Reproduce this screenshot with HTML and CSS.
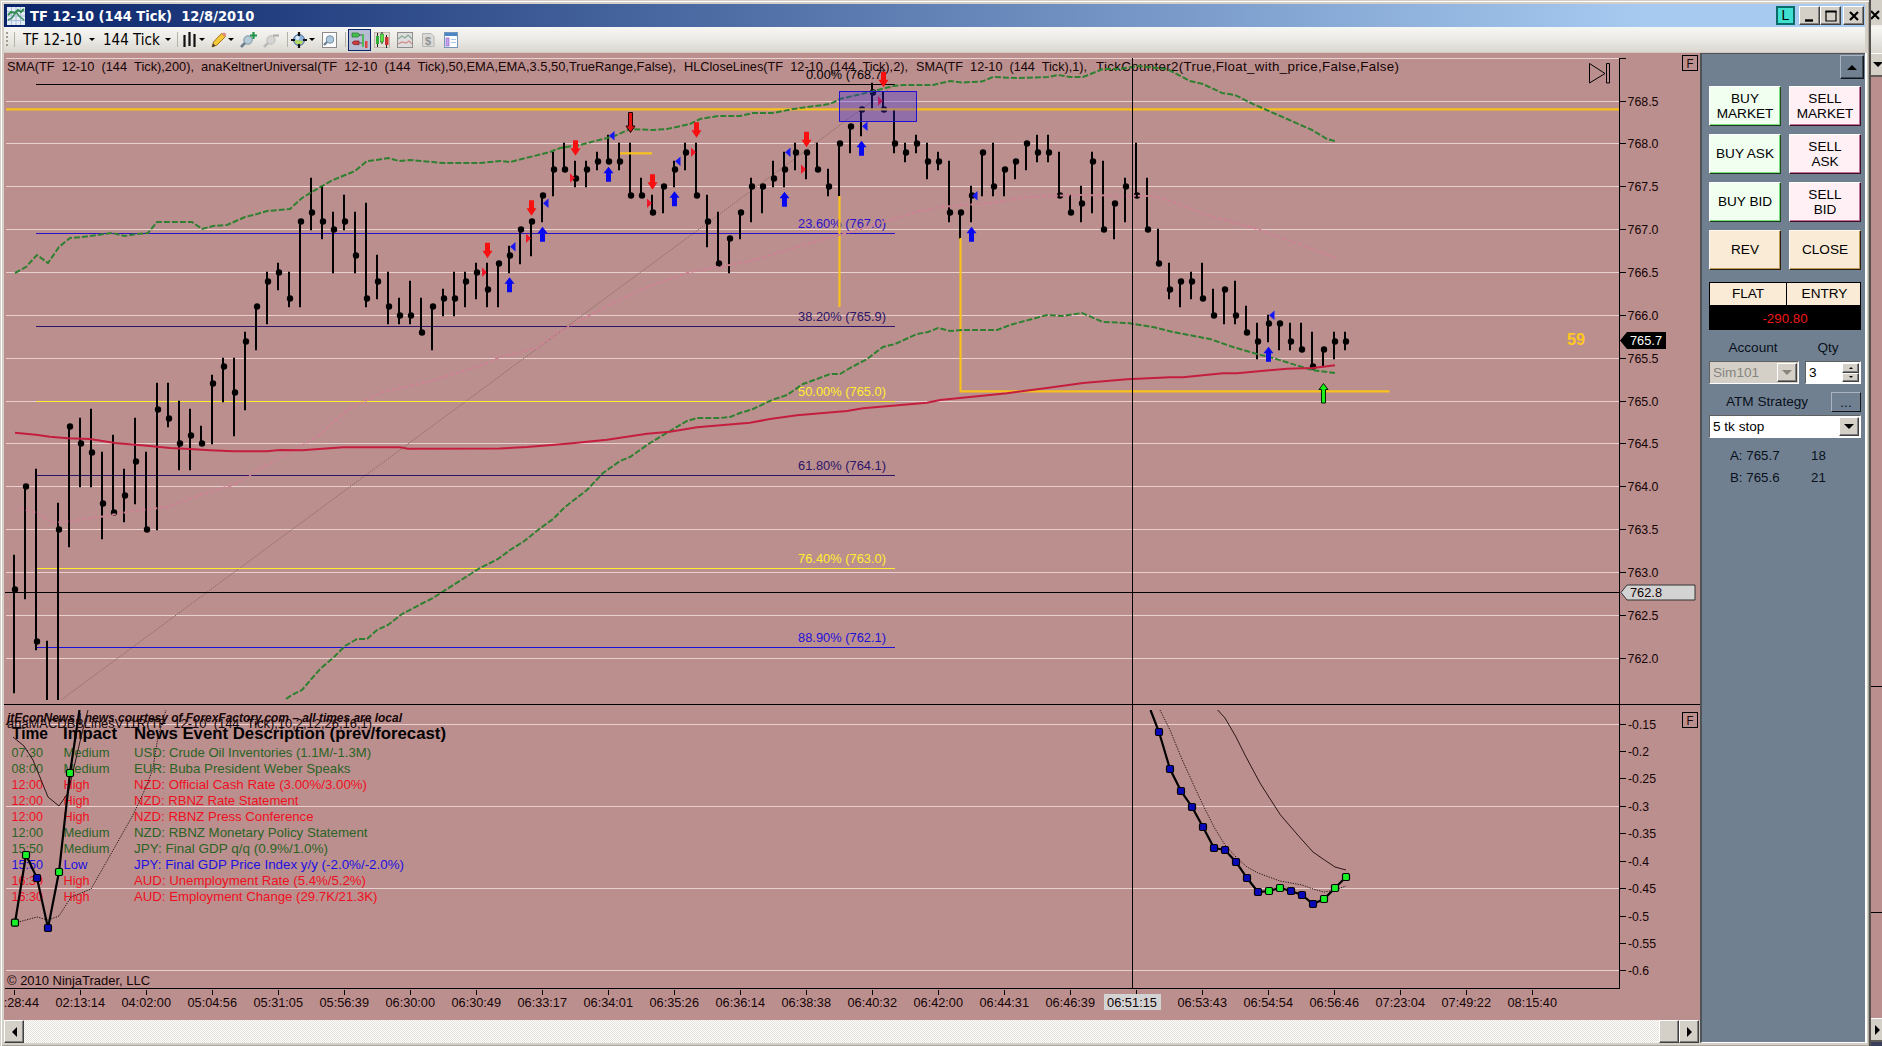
FILE: index.html
```html
<!DOCTYPE html>
<html lang="en">
<head>
  <meta charset="UTF-8">
  <title>TF 12-10 (144 Tick) 12/8/2010</title>
  <link rel="stylesheet" href="styles.css">
</head>
<body>
  <div class="window">
    <header class="titlebar">
      <svg class="app-icon" width="18" height="18" viewBox="0 0 18 18">
        <rect width="18" height="18" fill="#e4ecf6"/>
        <path d="M0 4.5h18M0 9h18M0 13.5h18M4.5 0v18M9 0v18M13.5 0v18" stroke="#a9bdd8" stroke-width="1"/>
        <path d="M1 8l3-3 4 1 3-3 3 2 3-3" fill="none" stroke="#2f8a4a" stroke-width="2"/>
        <path d="M1 13l4-2 4-6 3 4 5 4" fill="none" stroke="#3d8f63" stroke-width="1.6"/>
      </svg>
      <h1>TF 12-10 (144 Tick)&nbsp; 12/8/2010</h1>
      <div class="win-buttons">
        <span class="link-btn">L</span>
        <button class="win-btn"><svg width="12" height="12"><path d="M1 10.5h8" stroke="#000" stroke-width="2.4"/></svg></button>
        <button class="win-btn"><svg width="12" height="12"><path d="M1 1.5h10v9.500h-10z" fill="none" stroke="#000" stroke-width="1.2"/><path d="M.5 1.500h11" stroke="#000" stroke-width="2"/></svg></button>
        <button class="win-btn close"><svg width="12" height="12"><path d="M2 2l8 8M10 2l-8 8" stroke="#000" stroke-width="2.2"/></svg></button>
      </div>
    </header>

    <div class="toolbar">
      <i class="grip"></i><i class="sep"></i>
      <span class="tool-label instrument">TF 12-10</span><i class="caret"></i>
      <span class="tool-label interval">144 Tick</span><i class="caret"></i>
      <i class="sep s2"></i>
      <svg class="ic-bars" width="13" height="16"><path d="M1.500 3v12M6.500 0v14M11.500 2v13" stroke="#111" stroke-width="2.200"/></svg><i class="caret c3"></i>
      <svg class="ic-pencil" width="16" height="16"><path d="M1 15l1.500-5L10.500 1.500 14.500 4.500 6 13z" fill="#f3c93a" stroke="#a9741c"/><path d="M10.500 1.500l4 3 .8-2.500-2-1.600z" fill="#e58a8a"/><path d="M1 15l1-3.500 2.500 2.200z" fill="#333"/></svg><i class="caret c4"></i>
      <svg class="ic-zin" width="17" height="16"><path d="M1 15l5-5" stroke="#6c8191" stroke-width="2.600"/><circle cx="8" cy="8" r="4.200" fill="#b5cbd8" stroke="#7893a6"/><path d="M13.500 0v7M10 3.500h7" stroke="#22934a" stroke-width="2.200"/></svg>
      <svg class="ic-zout" width="17" height="16"><path d="M1 15l5-5" stroke="#bbb" stroke-width="2.600"/><circle cx="8" cy="8" r="4.200" fill="#d5d5d3" stroke="#bdbdbb"/><path d="M10 3.500h6" stroke="#a9a9a7" stroke-width="2"/></svg>
      <i class="sep s3"></i>
      <svg class="ic-cross" width="16" height="16"><circle cx="8" cy="8" r="5.500" fill="#8fb4dc" stroke="#476b94"/><path d="M4 8a4 4 0 0 0 8 1z" fill="#b5d95e"/><circle cx="6.500" cy="6" r="2" fill="#dcebf8"/><path d="M8 0v4M8 12v4M0 8h4M12 8h4" stroke="#111" stroke-width="2.200"/></svg><i class="caret c5"></i>
      <svg class="ic-find" width="15" height="16"><rect x=".5" y=".5" width="14" height="15" fill="#fdfdfd" stroke="#8b8b8b"/><path d="M2 13l4-4" stroke="#6c8191" stroke-width="2.400"/><circle cx="8" cy="7.500" r="3.800" fill="#adc8db" stroke="#7893a6"/></svg>
      <i class="sep s4"></i>
      <span class="tool-active"><svg width="18" height="18"><path d="M1 2h6l2 2-2 2h-6z" fill="#43bf4d" stroke="#2b7c35" stroke-width=".8"/><path d="M8 10h-5l-2 1.800 2 1.800h5z" fill="#d03a3a" stroke="#7f2424" stroke-width=".8"/><path d="M8 4h4M8 12h4" stroke="#555"/><rect x="11" y="3" width="2" height="13" fill="#4fb85b"/><rect x="14" y="10" width="2.500" height="7" fill="#d44"/></svg></span>
      <svg class="ic-candles" width="16" height="16"><rect x=".5" y=".5" width="15" height="15" fill="#e4e0d8" stroke="#bdb7ae"/><path d="M3.500 1v14M8 0v12M12.500 3v13" stroke="#222"/><rect x="2" y="4" width="3" height="8" fill="#2fae38"/><rect x="6.500" y="2" width="3" height="8" fill="#58e23c" stroke="#187020" stroke-width=".5"/><rect x="11" y="5" width="3.500" height="8" fill="#cc3232"/></svg>
      <svg class="ic-chart" width="16" height="16"><rect x=".5" y=".5" width="15" height="15" fill="#dedede" stroke="#8e8e8e"/><path d="M1 7l4-3 3 2 3-3 4 4" fill="none" stroke="#8aa894" stroke-width="1.200"/><path d="M1 12l4-2 4 1 3-2 3 3" fill="none" stroke="#d08a8a" stroke-width="1.200"/></svg>
      <svg class="ic-dollar" width="13" height="16"><path d="M.5 1.500h8.500l3 3v10h-11.500z" fill="#dadad8" stroke="#b5b5b3"/><text x="3" y="13" class="dollar">$</text></svg>
      <svg class="ic-props" width="14" height="16"><rect x=".5" y=".5" width="13" height="15" fill="#fff" stroke="#7395b8"/><rect x="1" y="1" width="12" height="3" fill="#4a86c8"/><rect x="2" y="6" width="3" height="8" fill="#c9a5f0" stroke="#8a62c4" stroke-width=".7"/><path d="M7 7.500h5M7 10.500h5" stroke="#a8c4e0"/></svg>
    </div>

    <div class="body">
      <div class="chart-col">
        <svg id="chart" class="chart" viewBox="4 53 1696 967" width="1696" height="967"></svg>
        <div class="scrollbar">
          <button class="sb-btn"><i class="tri-left"></i></button>
          <div class="sb-track"></div>
          <div class="sb-thumb"></div>
          <button class="sb-btn"><i class="tri-right"></i></button>
        </div>
      </div>

      <aside class="trader">
        <button class="collapse"><i class="tri-up"></i></button>
        <div class="orders">
          <button class="buy">BUY<br>MARKET</button><button class="sell">SELL<br>MARKET</button>
          <button class="buy">BUY ASK</button><button class="sell">SELL<br>ASK</button>
          <button class="buy">BUY BID</button><button class="sell">SELL<br>BID</button>
          <button class="flat">REV</button><button class="flat">CLOSE</button>
        </div>
        <div class="position">
          <span>FLAT</span><span>ENTRY</span>
        </div>
        <div class="pnl">-290.80</div>
        <div class="labels"><span>Account</span><span>Qty</span></div>
        <div class="fields">
          <div class="combo disabled"><span>Sim101</span><b><i class="tri-down"></i></b></div>
          <div class="spin"><span>3</span><div><b><i class="mini-up"></i></b><b><i class="mini-down"></i></b></div></div>
        </div>
        <div class="atm"><span>ATM Strategy</span><button>...</button></div>
        <div class="combo"><span>5 tk stop</span><b><i class="tri-down"></i></b></div>
        <div class="quote"><span>A: 765.7</span><span>18</span></div>
        <div class="quote"><span>B: 765.6</span><span>21</span></div>
      </aside>
    </div>
  </div>

  <div class="behind">
    <div class="b-title"><svg width="10" height="12"><path d="M0 2l8 8M8 2l-8 8" stroke="#000" stroke-width="2.200"/></svg></div>
    <div class="b-tool"></div>
    <div class="b-scroll"><i class="tri-down"></i></div>
    <div class="b-pane p1"></div>
    <div class="b-pane p2"></div>
    <div class="b-pane p3"></div>
    <div class="b-scroll b-last"><i class="tri-right"></i></div>
    <div class="b-foot"></div>
  </div>
  <script src="chart.js"></script>
</body>
</html>
```
FILE: styles.css
```css
* { box-sizing: border-box; }
body {
  margin: 0;
  width: 1882px;
  height: 1046px;
  overflow: hidden;
  display: flex;
  background: #d4d0c8;
  font-family: "Liberation Sans", Arial, sans-serif;
  color: #000;
}
button {
  font: inherit;
  color: inherit;
  padding: 0;
  margin: 0;
}
.window {
  width: 1871px;
  height: 1046px;
  padding: 4px 4px 3px 4px;
  border-right: 2px solid #55524e;
  background: #d4d0c8;
  box-shadow: inset 1px 1px #d4d0c8, inset 2px 2px #fff, inset -1px -1px #aaa69e;
}

/* title bar */
.titlebar {
  display: flex;
  align-items: center;
  height: 23px;
  padding: 0 1px 0 3px;
  background: linear-gradient(90deg, #0a246a, #a6caf0 88%);
}
.titlebar h1 {
  flex: 1;
  margin: 0 0 0 5px;
  color: #fff;
  font: bold 14.5px "DejaVu Sans Condensed", "DejaVu Sans", sans-serif;
  font-stretch: condensed;
  white-space: pre;
}
.win-buttons { display: flex; }
.link-btn {
  width: 19px;
  height: 19px;
  margin-right: 4px;
  border: 2px solid #0b6a6a;
  background: #40e0d0;
  font-size: 14px;
  line-height: 15px;
  text-align: center;
}
.win-btn {
  width: 21px;
  height: 19px;
  display: flex;
  align-items: center;
  justify-content: center;
}
.win-btn.close { margin-left: 2px; }
.win-btn, .sb-btn, .sb-thumb, .combo b, .spin b {
  background: #d4d0c8;
  border: 1px solid;
  border-color: #fff #404040 #404040 #fff;
  box-shadow: inset -1px -1px #808080;
}

/* toolbar */
.toolbar {
  display: flex;
  align-items: center;
  height: 26px;
  padding-left: 2px;
  background: linear-gradient(#f6f6f4, #eceae5 50%, #d9d7cf);
  border-bottom: 1px solid #d6c6c2;
}
.toolbar > * { flex: none; }
.grip {
  width: 2px;
  height: 15px;
  background: repeating-linear-gradient(#a09c90 0 2px, transparent 2px 4px);
}
.sep { width: 1px; height: 15px; margin-left: 6px; background: #b5b2a8; }
.tool-label {
  margin-left: 8px;
  font: 15px "DejaVu Sans Condensed", "DejaVu Sans", sans-serif;
  font-stretch: condensed;
  white-space: nowrap;
}
.instrument { width: 59px; letter-spacing: -0.1px; }
.interval { width: 55px; }
.caret {
  margin-left: 7px;
  border: 3px solid transparent;
  border-top-color: #000;
  border-bottom: 0;
}
.s2 { margin-left: 6px; }
.ic-bars { margin-left: 5px; }
.c3 { margin-left: 3px; }
.ic-pencil { margin-left: 6px; }
.c4 { margin-left: 1px; }
.ic-zin { margin-left: 6px; }
.ic-zout { margin-left: 6px; }
.s3 { margin-left: 7px; }
.ic-cross { margin-left: 3px; }
.c5 { margin-left: 2px; }
.ic-find { margin-left: 7px; }
.s4 { margin-left: 8px; }
.tool-active {
  display: flex;
  align-items: center;
  justify-content: center;
  width: 23px;
  height: 22px;
  margin-left: 2px;
  border: 1px solid #0a246a;
  background: #b6bdd2;
}
.ic-candles { margin-left: 3px; }
.ic-chart { margin-left: 7px; }
.ic-dollar { margin-left: 9px; }
.ic-props { margin-left: 9px; }
.dollar { font-size: 11px; font-weight: bold; fill: #929290; }

/* chart */
.body { display: flex; height: 990px; }
.chart-col { width: 1696px; }
.chart { display: block; background: #bc8f8f; }
.chart text { font-size: 13.3px; white-space: pre; }
.grid { stroke: #e8d0cf; stroke-width: 1; shape-rendering: crispEdges; }
.axis { stroke: #000; stroke-width: 1; fill: none; }
.fib { stroke-width: 1; shape-rendering: crispEdges; }
.bar { stroke: #000; stroke-width: 2; }
.gold { stroke: #f7c21c; stroke-width: 2.2; fill: none; }
.band { stroke: #2f8030; stroke-width: 2; fill: none; stroke-dasharray: 6 2; }
.sma { stroke: #c41e3e; stroke-width: 2; fill: none; }
.mid { stroke: #cb8293; stroke-width: 2; fill: none; stroke-dasharray: 4 2; }
.trend { stroke: #8c6c66; stroke-width: 1; stroke-dasharray: 1.500 1; }
.thin { stroke: #2a1616; stroke-width: 1; fill: none; }
.dots { stroke-dasharray: 1.300 1.200; }
.macd { stroke: #000; stroke-width: 2.2; fill: none; }
.news-title { font-weight: bold; font-style: italic; }
.chart .news-head { font-weight: bold; font-size: 16px; }
.chart .counter { font-weight: bold; font-size: 16px; fill: #ffc81e; }

/* scroll bar */
.scrollbar { display: flex; height: 23px; padding-right: 1px; }
.sb-btn, .sb-thumb { width: 20px; height: 23px; flex: none; }
.sb-btn { display: flex; align-items: center; justify-content: center; }
.sb-track {
  flex: 1;
  background: repeating-conic-gradient(#fff 0 25%, #e3e0d9 0 50%) 0 0 / 2px 2px;
}
.tri-left { border: 5px solid transparent; border-right-color: #000; border-left: 0; }
.tri-right { border: 5px solid transparent; border-left-color: #000; border-right: 0; }
.tri-up { border: 5px solid transparent; border-bottom-color: #000; border-top: 0; }
.tri-down { border: 5px solid transparent; border-top-color: #000; border-bottom: 0; }

/* order panel */
.trader {
  width: 166px;
  padding: 1px 1px 0 7px;
  display: flex;
  flex-direction: column;
  background: #708090;
  border-left: 2px solid #4e5358;
  border-top: 1px solid #4e5358;
  border-bottom: 1px solid #fff;
  font-size: 13.6px;
  box-shadow: 2px 0 #fff;
}
.collapse {
  align-self: flex-end;
  width: 24px;
  height: 24px;
  display: flex;
  align-items: center;
  justify-content: center;
  background: #708090;
  border: 1px solid;
  border-color: #a9b4c0 #10161c #10161c #a9b4c0;
  box-shadow: inset -1px -1px #3d4854;
}
.orders {
  display: grid;
  grid-template-columns: 72px 72px;
  grid-auto-rows: 40px;
  gap: 8px;
  margin-top: 7px;
}
.orders button {
  border: 1px solid;
  padding-bottom: 1px;
  line-height: 15px;
}
.orders .buy { background: #f0fff0; border-color: #fff #1f4a1f #1f3a1f #fff; box-shadow: inset -1px -1px #7ae07a; }
.orders .sell { background: #fff0f5; border-color: #fff #3a1226 #3a1226 #fff; box-shadow: inset -1px -1px #c8709c; }
.orders .flat { background: #faebd7; border-color: #fffaf0 #2a2010 #2a2010 #fffaf0; box-shadow: inset -1px -1px #c09a58; }
.position {
  display: grid;
  grid-template-columns: 76px 76px;
  width: 152px;
  height: 24px;
  margin-top: 12px;
  background: #faebd7;
  border: 1px solid #000;
  text-align: center;
  line-height: 22px;
}
.position span + span { border-left: 1px solid #000; }
.pnl {
  width: 152px;
  height: 24px;
  background: #000;
  color: #f01818;
  text-align: center;
  line-height: 25px;
  font-size: 13.3px;
}
.labels {
  display: grid;
  grid-template-columns: 88px 62px;
  margin-top: 9px;
  height: 22px;
  line-height: 17px;
  text-align: center;
  color: #08101c;
}
.fields { display: flex; gap: 6px; }
.combo, .spin {
  display: flex;
  width: 152px;
  height: 23px;
  flex: none;
  background: #fff;
  border: 1px solid;
  border-color: #606060 #fff #fff #606060;
  padding: 1px;
}
.combo span, .spin span { flex: 1; padding-left: 2px; line-height: 20px; }
.combo b {
  width: 20px;
  display: flex;
  align-items: center;
  justify-content: center;
}
.combo.disabled { width: 90px; background: #d4d0c8; color: #87847e; }
.combo.disabled .tri-down { border-top-color: #87847e; }
.spin { width: 56px; }
.spin div { width: 17px; display: flex; flex-direction: column; }
.spin b { flex: 1; display: flex; align-items: center; justify-content: center; }
.mini-up { border: 2px solid transparent; border-bottom-color: #000; border-top: 0; }
.mini-down { border: 2px solid transparent; border-top-color: #000; border-bottom: 0; }
.atm {
  display: flex;
  justify-content: space-between;
  width: 152px;
  height: 20px;
  margin: 8px 0 3px;
  padding-left: 17px;
  line-height: 19px;
  color: #08101c;
}
.atm button {
  width: 30px;
  background: #708090;
  border: 1px solid;
  border-color: #a9b4c0 #10161c #10161c #a9b4c0;
}
.quote {
  display: grid;
  grid-template-columns: 81px 40px;
  margin-left: 21px;
  line-height: 22px;
  color: #08101c;
  font-size: 13.3px;
}
.combo + .quote { margin-top: 7px; }

/* edge of the window underneath */
.behind {
  width: 11px;
  display: flex;
  flex-direction: column;
  background: #bc8f8f;
}
.b-title { height: 27px; padding-top: 9px; background: #d4d0c8; border-bottom: 2px solid #f2f0ee; }
.b-title svg { display: block; }
.b-tool { height: 26px; background: linear-gradient(#f6f6f4, #d9d7cf); }
.b-scroll {
  height: 24px;
  display: flex;
  align-items: center;
  padding-left: 2px;
  overflow: hidden;
  background: #d4d0c8;
  border-top: 1px solid #fff;
  border-bottom: 2px solid #605c58;
}
.b-pane { border-bottom: 1px solid #000; }
.p1 { height: 610px; }
.p2 { height: 226px; }
.p3 { flex: 1; border: 0; }
.b-last { padding-left: 4px; }
.b-foot { height: 4px; background: #3b3f5c; }
```
FILE: chart.js
```js
const svg = document.getElementById('chart');
const out = [];

const barX = i => 14 + 11 * i;
// prices are in ticks (tenths); rows snap to whole pixels
const priceY = p => Math.floor(101.1 + (7685 - p) * 8.57) + 0.5;

function line(x1, y1, x2, y2, cls, extra = '') {
  out.push(`<line x1="${x1}" y1="${y1}" x2="${x2}" y2="${y2}" class="${cls}" ${extra}/>`);
}
function poly(pts, cls) {
  out.push(`<polyline points="${pts}" class="${cls}"/>`);
}
function text(x, y, str, width, fill = '#140404', cls = '') {
  const len = width ? `textLength="${width}" lengthAdjust="spacingAndGlyphs"` : '';
  out.push(`<text x="${x}" y="${y}" fill="${fill}" class="${cls}" ${len}>${str}</text>`);
}

// high, low, close
const bars = [
  [7632,7616,7628],[7640,7627,7640],[7642,7621,7622],[7622,7600,7600],[7638,7600,7635],[7647,7633,7647],
  [7648,7640,7645],[7649,7640,7644],[7644,7634,7638],[7646,7637,7637],[7642,7636,7639],[7648,7638,7643],
  [7644,7635,7635],[7652,7635,7649],[7652,7647,7648],[7650,7642,7645],[7649,7642,7646],[7647,7645,7645],
  [7653,7645,7652],[7655,7650,7654],[7655,7646,7651],[7658,7649,7657],[7661,7656,7661],[7665,7659,7664],
  [7666,7663,7665],[7665,7661,7662],[7671,7661,7671],[7676,7670,7672],[7675,7669,7671],[7672,7665,7670],
  [7674,7670,7671],[7672,7665,7667],[7673,7661,7662],[7667,7662,7664],[7665,7659,7661],[7662,7659,7660],
  [7664,7659,7660],[7662,7658,7658],[7661,7656,7661],[7663,7660,7662],[7665,7660,7662],[7665,7661,7664],
  [7666,7662,7665],[7666,7661,7663],[7666,7661,7666],[7668,7665,7667],[7670,7666,7670],[7671,7667,7671],
  [7674,7671,7674],[7679,7674,7677],[7680,7677,7677],[7678,7675,7676],[7678,7675,7677],[7679,7677,7678],
  [7681,7678,7678],[7680,7677,7678],[7680,7674,7674],[7676,7674,7674],[7674,7672,7672],[7675,7672,7675],
  [7678,7675,7677],[7680,7677,7679],[7680,7674,7674],[7674,7668,7671],[7672,7666,7666],[7669,7665,7669],
  [7672,7669,7672],[7676,7671,7675],[7675,7672,7675],[7678,7675,7676],[7679,7675,7677],[7680,7677,7679],
  [7679,7676,7679],[7680,7677,7677],[7677,7674,7675],[7680,7674,7680],[7682,7679,7682],[7684,7681,7684],
  [7687,7684,7686],[7686,7684,7684],[7684,7679,7680],[7680,7678,7679],[7681,7679,7680],[7680,7676,7678],
  [7679,7677,7678],[7678,7671,7672],[7672,7669,7672],[7675,7671,7674],[7679,7674,7679],[7680,7674,7675],
  [7677,7674,7677],[7678,7676,7678],[7680,7677,7680],[7681,7678,7679],[7681,7678,7679],[7679,7674,7674],
  [7674,7672,7672],[7675,7671,7673],[7679,7672,7678],[7678,7670,7670],[7673,7669,7673],[7676,7671,7675],
  [7680,7674,7674],[7676,7670,7670],[7670,7666,7666],[7666,7662,7663],[7664,7661,7664],[7665,7662,7664],
  [7666,7662,7662],[7663,7660,7660],[7663,7659,7663],[7664,7659,7660],[7661,7658,7658],[7659,7655,7657],
  [7660,7657,7659],[7659,7656,7659],[7659,7656,7657],[7659,7656,7656],[7658,7654,7654],[7656,7654,7656],
  [7658,7655,7657],[7658,7656,7657]
];

out.push('<clipPath id="price"><rect x="4" y="58" width="1616" height="642"/></clipPath>');
out.push('<clipPath id="lower"><rect x="4" y="710" width="1616" height="278"/></clipPath>');
out.push('<clipPath id="times"><rect x="4" y="990" width="1690" height="30"/></clipPath>');

// grid and price scale
for (let p = 7690; p >= 7620; p -= 5) {
  const y = priceY(p);
  line(6, y, 1619, y, 'grid');
  line(1619, y, 1626, y, 'axis');
  if (p < 7690) text(1627.5, y + 4.5, (p / 10).toFixed(1), 31);
}
for (let k = 0; k <= 9; k++) {
  const y = Math.floor(724.1 + k * 27.42) + 0.5;
  if (k % 3 === 0) line(6, y, 1619, y, 'grid');
  line(1619, y, 1626, y, 'axis');
  const s = String(+(-0.15 - k * 0.05).toFixed(2));
  text(1628, y + 4.5, s, s.length > 4 ? 28 : 21);
}

// indicator captions
const sp = s => s.replace(/ /g, '&#160;&#160;');
text(7, 71, sp('SMA(TF 12-10 (144 Tick),200),'), 187);
text(201, 71, sp('anaKeltnerUniversal(TF 12-10 (144 Tick),50,EMA,EMA,3.5,50,TrueRange,False),'), 475);
text(684, 71, sp('HLCloseLines(TF 12-10 (144 Tick),2),'), 224);
text(916, 71, sp('SMA(TF 12-10 (144 Tick),1),'), 171);
out.push('<text x="1096" y="71" fill="#140404" textLength="303">TickCounter2(True,Float_with_price,False,False)</text>');

// fibonacci levels
line(36, 718.5, 895, 84.5, 'trend', 'clip-path="url(#price)"');
[
  [84.5, '0.00% (768.7)', '#000', 806, 79],
  [233.5, '23.60% (767.0)', '#2a12c8', 798, 228],
  [326.5, '38.20% (765.9)', '#2c1468', 798, 321],
  [401.5, '50.00% (765.0)', '#ffee30', 798, 396],
  [475.5, '61.80% (764.1)', '#2c1468', 798, 470],
  [568.5, '76.40% (763.0)', '#ffee30', 798, 563],
  [647.5, '88.90% (762.1)', '#1c10d8', 798, 642]
].forEach(([y, label, color, x, ty]) => {
  line(36, y, 895, y, 'fib', `stroke="${color}"`);
  text(x, ty, label, x === 806 ? 80 : 88, color);
});

// price bars
out.push('<g clip-path="url(#price)">');
bars.forEach(([h, l, c], i) => {
  const x = barX(i);
  line(x, priceY(h) - .8, x, priceY(l) + .8, 'bar');
  out.push(`<circle cx="${x + 1}" cy="${priceY(c)}" r="3.200"/>`);
});
out.push('</g>');

line(6, 109.3, 1619, 109.3, 'gold');
line(620, 153.3, 652, 153.3, 'gold');
line(839.5, 196, 839.5, 307, 'gold');
poly('960.5,238 960.5,391.3 1389.5,391.3', 'gold');

// keltner channel
poly('15,273 26,267 37,255 48,263 59,247 70,238 82,237 97,235 112,233 125,236 137,234 148,233 157,222 192,222 202,229 213,226 227,225 245,217 257,214 267,211 290,209 302,198 322,186 333,180 355,171 367,161 377,160 388,158 399,161 410,160 421,161 433,162 443,163 480,163 500,161 510,162 550,152 560,148 580,145 595,141 607,138 617,135 630,129 652,130 667,129 690,124 700,119 718,116 740,116 753,113 773,113 793,109 830,104 840,99 870,92 893,86 903,85 933,85 950,81 962,82.500 982,81.500 993,77 1017,78 1048,77 1058,75 1070,77 1083,77 1103,69 1120,69 1137,66 1167,69 1190,81 1203,84 1222,93 1235,95 1253,104 1312,130 1327,139 1335,141', 'band');
poly('286,699 292,695 302,690 320,669 333,658 345,646 357,639 367,639 377,630 388,625 402,614 423,603 433,598 447,589 480,568 498,559 510,550 523,542 538,530 553,519 565,507 587,490 603,473 620,461 630,457 650,443 670,431 687,421 697,418 720,418 730,417 740,413 753,409 772,400 787,395 803,384 817,379 830,374 840,374 850,368 867,359 883,347 895,344 917,334 928,332 938,328 950,331 963,330 997,330 1010,325 1047,315 1062,316 1082,313 1103,322 1128,323 1153,327 1173,332 1210,339 1233,347 1257,354 1273,358 1312,370 1335,373', 'band');
poly('20,508 37,513 53,523 70,521 100,517 133,511 167,507 200,495 233,485 267,465 317,437 347,410 383,392 427,382 480,366 500,357 537,348 557,333 613,303 647,287 690,272 747,262 813,242 847,233 913,213 940,207 990,203 1027,197 1073,195 1153,196 1173,202 1207,215 1257,229 1307,247 1335,258', 'mid');
poly('15,432.700 36,434.700 50,436.700 68,438.300 90,439 115,443 147,445.700 170,448 190,449 210,450.300 233,451.300 267,451.300 280,450 302,450.300 343,447.300 400,447.300 408,448.700 500,448.500 527,447 567,443.700 607,439.700 647,433.700 670,431.700 697,427.300 750,422.700 770,419 797,415.300 847,411 863,408.300 927,402.700 940,400 950,399 1007,393.300 1047,388 1083,383 1127,379.300 1170,377.300 1183,377.300 1223,373.300 1237,373.300 1287,368.700 1313,368 1335,365.300', 'sma');

// signal markers: [bar, y]
[[43,242.7],[47,200.3],[51,140.3],[58,174.3],[62,122.3],[72,131.7],[79,71.7]].forEach(([i, y]) => {
  const x = barX(i) + .5;
  out.push(`<path d="M${x - 2.5} ${y}h5v8h2.500l-5 7.500-5-7.500h2.500z" fill="#f81010"/>`);
});
[[45,277.3],[48,226.7],[54,166.7],[60,191.3],[70,191.7],[77,140.7],[87,226.7],[114,346.7]].forEach(([i, y]) => {
  const x = barX(i) + .5;
  out.push(`<path d="M${x} ${y}l5 6.500h-2.500v8.500h-5v-8.500h-2.500z" fill="#0808f0"/>`);
});
[[45,246.7],[48,203.3],[54,135.7],[60,161.3],[70,152.3],[77,126.3],[87,195.7],[114,315.3]].forEach(([i, y]) => {
  out.push(`<path d="M${barX(i) + 1} ${y}l5.500-4.800v9.600z" fill="#1818f0"/>`);
});
[[43,272.3],[47,238.3],[51,178],[58,203.3],[62,152.3],[72,169.3],[79,101]].forEach(([i, y]) => {
  out.push(`<path d="M${barX(i)} ${y}l-5-4.800v9.600z" fill="#f01828"/>`);
});
out.push('<path d="M628.500 112.500h4v13.500h2.500l-4.500 6.500-4.500-6.500h2.500z" fill="#e81010" stroke="#200" stroke-width="1"/>');
out.push('<path d="M1323.500 383.500l4.500 6h-2.500v13.500h-4v-13.500h-2.500z" fill="#18f018" stroke="#020" stroke-width="1"/>');
out.push('<rect x="839.5" y="91.5" width="77" height="30" fill="#3c28dc" fill-opacity=".32" stroke="#2010d0" stroke-width="1"/>');
text(1567, 345, '59', 18, '#ffc81e', 'counter');

// news list
text(7, 721.5, 'jtEconNews | news courtesy of ForexFactory.com – all times are local', 395, '#140404', 'news-title');
text(7, 727.5, sp('anaMACDBBLinesV11R(TF 12-10 (144 Tick),10,2,12,26,16,1)'), 365);
text(12, 739, 'Time', 36, '#000', 'news-head');
text(63, 739, 'Impact', 54, '#000', 'news-head');
text(134, 739, 'News Event Description (prev/forecast)', 312, '#000', 'news-head');
const impact = { Medium: ['#2a6424', 46], High: ['#ee1020', 26], Low: ['#2010e0', 24] };
[
  ['07:30', 'Medium', 'USD: Crude Oil Inventories (1.1M/-1.3M)', 237],
  ['08:00', 'Medium', 'EUR: Buba President Weber Speaks', 216.5],
  ['12:00', 'High', 'NZD: Official Cash Rate (3.00%/3.00%)', 233],
  ['12:00', 'High', 'NZD: RBNZ Rate Statement', 164.5],
  ['12:00', 'High', 'NZD: RBNZ Press Conference', 179.5],
  ['12:00', 'Medium', 'NZD: RBNZ Monetary Policy Statement', 233.5],
  ['15:50', 'Medium', 'JPY: Final GDP q/q (0.9%/1.0%)', 194],
  ['15:50', 'Low', 'JPY: Final GDP Price Index y/y (-2.0%/-2.0%)', 270],
  ['16:30', 'High', 'AUD: Unemployment Rate (5.4%/5.2%)', 232],
  ['16:30', 'High', 'AUD: Employment Change (29.7K/21.3K)', 243.5]
].forEach(([time, level, desc, w], i) => {
  const [color, lw] = impact[level];
  const y = 756.5 + i * 16;
  text(11.5, y, time, 31.5, color);
  text(63.5, y, level, lw, color);
  text(134, y, desc, w, color);
});
text(7, 985, '© 2010 NinjaTrader, LLC', 143);

// MACD pane
out.push('<g clip-path="url(#lower)">');
poly('13,737 24,746 33,760 48,797 59,806 68,793 82,733 88,710', 'thin');
poly('15,923 37,917 48,920 59,916 71,897 91,889 103,868 133,815 147,785 153,768 158,737 166,710', 'thin dots');
poly('1217.700,710 1225,718 1236,737 1245,755 1260,783 1269.500,798 1280.500,815 1299.500,837 1313,852 1324.500,860 1335,867 1346,870', 'thin');
poly('1160,710 1170,730 1181,757 1195,788 1203,805 1214,827 1225,845 1236,857 1247,867 1258,873 1280,881 1302,885 1313,889 1324,892 1335,890 1346,886', 'thin dots');
const left = [[0,922.7,1],[1,855,1],[2,878,0],[3,928,0],[4,872,1],[5,773,1]];
const right = [[104,732,0],[105,769,0],[106,791,0],[107,807,0],[108,827,0],[109,848,0],[110,850,0],[111,862,0],
  [112,878,0],[113,892,0],[114,891,1],[115,888,1],[116,891,0],[117,895,0],[118,904,0],[119,899,1],[120,888,1],[121,877,1]];
const pts = a => a.map(([i, y]) => `${barX(i) + 1},${y}`).join(' ');
poly(pts(left) + ' 79.500,710', 'macd');
poly('1150.500,710 ' + pts(right), 'macd');
[...left, ...right].forEach(([i, y, up]) => {
  out.push(`<rect x="${barX(i) - 2.5}" y="${y - 3.5}" width="7" height="7" rx="1.500" fill="${up ? '#18f028' : '#0808b8'}" stroke="#000" stroke-width="1.200"/>`);
});
out.push('</g>');

// pane borders and crosshair
line(1619.5, 58, 1619.5, 988.5, 'axis');
line(4, 704.5, 1700, 704.5, 'axis');
line(5, 988.5, 1620, 988.5, 'axis');
line(5, 592.5, 1619, 592.5, 'axis');
line(1132.5, 58, 1132.5, 988, 'axis');

// time scale
out.push('<g clip-path="url(#times)">');
['01:28:44','02:13:14','04:02:00','05:04:56','05:31:05','05:56:39','06:30:00','06:30:49','06:33:17','06:34:01',
 '06:35:26','06:36:14','06:38:38','06:40:32','06:42:00','06:44:31','06:46:39','','06:53:43','06:54:54',
 '06:56:46','07:23:04','07:49:22','08:15:40'].forEach((t, k) => {
  const x = 14.5 + 66 * k;
  line(x, 989, x, 995, 'axis');
  if (t) text(x - 25, 1006.7, t, 49.5);
});
out.push('</g>');
out.push('<rect x="1104" y="994" width="57" height="16" fill="#d3d3d3"/>');
text(1107, 1006.7, '06:51:15', 50);

// price tags
out.push('<path d="M1620 340.500l7-8.500h39v17h-39z"/>');
text(1630, 345, '765.7', 32, '#fff');
out.push('<path d="M1621 592.500l6-7.500h68v15h-68z" fill="#d3d3d3" stroke="#333" stroke-width="1"/>');
text(1630, 597, '762.8', 32);

// pane buttons
[55.5, 712.5].forEach(y => {
  out.push(`<rect x="1682.500" y="${y}" width="15" height="15" class="axis"/>`);
  text(1686.5, y + 12, 'F', 7);
});
out.push('<path d="M1589.500 63.500l15.500 10-15.500 9.500zM1606.500 63.500h3v19.500h-3z" class="axis"/>');

svg.innerHTML = out.join('');
```
